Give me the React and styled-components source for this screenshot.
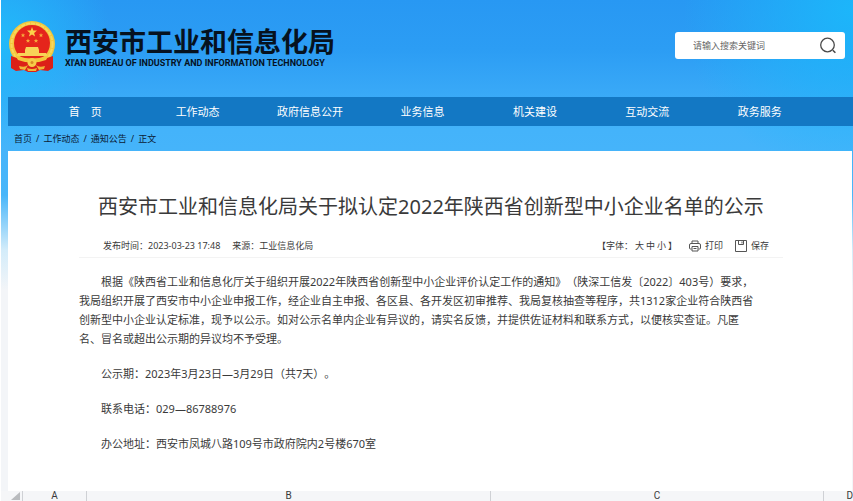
import React from 'react';
import styled, { createGlobalStyle } from 'styled-components';

const navItems = ['首\u3000页', '工作动态', '政府信息公开', '业务信息', '机关建设', '互动交流', '政务服务'];

const columns = ['A', 'B', 'C', 'D'];

const Emblem = () => (
    <svg width="48" height="52" viewBox="0 0 48 52" aria-hidden="true">
        <circle cx="24" cy="24" r="23" fill="#f3c73c" />
        <circle cx="24" cy="24" r="20.500" fill="none" stroke="#f9d75c" strokeWidth="2" strokeDasharray="4 1" />
        <circle cx="24" cy="23" r="18" fill="#e5251c" />
        <path d="M24 7l1.300 3.400 3.700.2-2.900 2.300 1 3.600-3.100-2-3.100 2 1-3.600-2.900-2.300 3.700-.2z" fill="#fbd24a" />
        <g fill="#f7a93c">
            <path d="M15 13l.6 1.500 1.600.1-1.200 1 .4 1.600-1.400-.9-1.400.9.4-1.600-1.200-1 1.600-.1z" />
            <path d="M33 13l.6 1.500 1.600.1-1.200 1 .4 1.600-1.400-.9-1.400.9.4-1.600-1.200-1 1.600-.1z" />
            <path d="M20 18.500l.6 1.500 1.600.1-1.200 1 .4 1.600-1.400-.9-1.400.9.4-1.600-1.200-1 1.600-.1z" />
            <path d="M28 18.500l.6 1.500 1.600.1-1.200 1 .4 1.600-1.400-.9-1.400.9.4-1.600-1.200-1 1.600-.1z" />
        </g>
        <path d="M18 27h12l1 3H17zM17 30h14v3h7l2 3H8l2-3h7z" fill="#f8d458" />
        <path d="M3 36l6 2q15 5 30 0l6-2v12l-5 3-8-1-4 2h-8l-4-2-8 1-5-3z" fill="#dc2018" />
        <path d="M7 35q17 7 34 0l-3 5q-14 5-28 0z" fill="#f3c73c" />
        <circle cx="24" cy="42.500" r="4.500" fill="#f6cd49" />
        <circle cx="24" cy="42.500" r="1.500" fill="#d98b25" />
        <path d="M11 46q6 2 9-1l-3 5-5-1zM37 46q-6 2-9-1l3 5 5-1zM19 48q5 2 10 0l-1 3h-8z" fill="#f0b638" />
    </svg>
);

const SearchIcon = () => (
    <svg width="18" height="18" viewBox="0 0 18 18" fill="none" stroke="#4a4a4a" strokeWidth="1.300" aria-hidden="true">
        <circle cx="8.500" cy="8" r="6.800" />
        <path d="M13.800 13.200l2.600 2.600" strokeWidth="1.600" />
    </svg>
);

const PrintIcon = () => (
    <svg width="12" height="12" viewBox="0 0 12 12" fill="none" stroke="#555" aria-hidden="true">
        <path d="M3 3.500V1h6v2.500M2.500 9H1.500Q.5 9 .5 8V5Q.5 3.500 2 3.500h8q1.500 0 1.500 1.500v3q0 1-1 1h-1" />
        <path d="M3 6.500h6V11H3zM4.500 8.500h3" />
    </svg>
);

const SaveIcon = () => (
    <svg width="12" height="12" viewBox="0 0 12 12" fill="none" stroke="#555" aria-hidden="true">
        <path d="M.5.5h11v11H.5z" />
        <path d="M3.500.5v4h5v-4M7 1.500v2" />
    </svg>
);

const App = () => {
    return (
        <>
            <GlobalStyle />
            <Page>
                <Header>
                    <Brand href="#">
                        <Emblem />
                        <BrandText>
                            <BrandName>西安市工业和信息化局</BrandName>
                            <BrandLatin>XI'AN BUREAU OF INDUSTRY AND INFORMATION TECHNOLOGY</BrandLatin>
                        </BrandText>
                    </Brand>
                    <Search onSubmit={e => e.preventDefault()}>
                        <SearchInput type="text" aria-label="搜索" placeholder="请输入搜索关键词" />
                        <SearchButton type="submit" aria-label="搜索">
                            <SearchIcon />
                        </SearchButton>
                    </Search>
                </Header>
                <Nav>
                    {navItems.map(item => (
                        <NavLink href="#" key={item}>{item}</NavLink>
                    ))}
                </Nav>
                <Breadcrumb>
                    <a href="#">首页</a>
                    <Slash>/</Slash>
                    <a href="#">工作动态</a>
                    <Slash>/</Slash>
                    <a href="#">通知公告</a>
                    <Slash>/</Slash>
                    <span>正文</span>
                </Breadcrumb>
                <Article>
                    <Title>西安市工业和信息化局关于拟认定2022年陕西省创新型中小企业名单的公示</Title>
                    <Meta>
                        <MetaGroup>
                            <span>发布时间：2023-03-23 17:48</span>
                            <span>来源：工业信息化局</span>
                        </MetaGroup>
                        <MetaGroup>
                            <FontSizes>
                                <span>【字体：</span>
                                <PlainButton type="button">大</PlainButton>
                                <PlainButton type="button">中</PlainButton>
                                <PlainButton type="button">小</PlainButton>
                                <span>】</span>
                            </FontSizes>
                            <PlainButton type="button"><PrintIcon />打印</PlainButton>
                            <PlainButton type="button"><SaveIcon />保存</PlainButton>
                        </MetaGroup>
                    </Meta>
                    <Content>
                        <p>
                            根据《陕西省工业和信息化厅关于组织开展2022年陕西省创新型中小企业评价认定工作的通知》（陕深工信发〔2022〕403号）要求，<br />
                            我局组织开展了西安市中小企业申报工作，经企业自主申报、各区县、各开发区初审推荐、我局复核抽查等程序，共1312家企业符合陕西省<br />
                            创新型中小企业认定标准，现予以公示。如对公示名单内企业有异议的，请实名反馈，并提供佐证材料和联系方式，以便核实查证。凡匿<br />
                            名、冒名或超出公示期的异议均不予受理。
                        </p>
                        <p>公示期：2023年3月23日—3月29日（共7天）。</p>
                        <p>联系电话：029—86788976</p>
                        <p>办公地址：西安市凤城八路109号市政府院内2号楼670室</p>
                    </Content>
                </Article>
                <SheetHeader>
                    <Corner>
                        <svg width="9" height="8" viewBox="0 0 9 8" aria-hidden="true">
                            <path d="M9 0v8H0z" fill="#b9bbbe" />
                        </svg>
                    </Corner>
                    {columns.map(name => (
                        <Column key={name}>{name}</Column>
                    ))}
                </SheetHeader>
            </Page>
        </>
    );
};

const GlobalStyle = createGlobalStyle`
  * {
    box-sizing: border-box;
  }
  body {
    margin: 0;
    font-family: "Noto Sans", "Noto Sans CJK SC", sans-serif;
    color: #3a3a3a;
    text-spacing-trim: space-all;
  }
  a {
    color: inherit;
    text-decoration: none;
  }
  button, input {
    font-family: inherit;
  }
  h1, p {
    margin: 0;
  }
`;

const Page = styled.div`
  min-height: 100vh;
  display: flex;
  flex-direction: column;
  overflow: hidden;
  border-left: 1px solid #fff;
  background:
    radial-gradient(circle at 0 40px, #22bafa 0, rgba(34, 186, 250, 0) 110px),
    radial-gradient(circle at 100% 10px, #1cb6fa 0, rgba(28, 182, 250, 0) 170px),
    linear-gradient(#2898f3 0, #2c9df4 50px, #44b3fa 130px, #48b6fa 195px, #d3ecfa 250px, #f3f5f8 290px);
`;

const Header = styled.header`
  display: flex;
  align-items: center;
  justify-content: space-between;
  height: 97px;
  padding: 0 8px 6px 7px;
`;

const Brand = styled.a`
  display: flex;
  align-items: center;
  gap: 9px;
  color: #06121f;
`;

const BrandText = styled.span`
  display: flex;
  flex-direction: column;
  padding-top: 2px;
`;

const BrandName = styled.span`
  font-family: "Noto Sans CJK SC", sans-serif;
  font-size: 27px;
  font-weight: 700;
  line-height: 32px;
`;

const BrandLatin = styled.span`
  font-family: Roboto, sans-serif;
  font-size: 9px;
  font-weight: 700;
  line-height: 12px;
  white-space: nowrap;
`;

const Search = styled.form`
  display: flex;
  align-items: center;
  width: 170px;
  height: 27px;
  padding: 0 8px 0 18px;
  border-radius: 3px;
  background: #fff;
`;

const SearchInput = styled.input`
  flex: 1;
  min-width: 0;
  padding: 0;
  border: 0;
  outline: 0;
  background: none;
  font-size: 9px;

  &::placeholder {
    color: #666;
  }
`;

const SearchButton = styled.button`
  display: flex;
  padding: 0;
  border: 0;
  background: none;
  cursor: pointer;
`;

const Nav = styled.nav`
  display: flex;
  margin-left: 7px;
  padding: 0 37px 0 21px;
  background: #1378c4;
`;

const NavLink = styled.a`
  flex: 1;
  color: #fff;
  font-size: 11px;
  line-height: 29px;
  text-align: center;
`;

const Breadcrumb = styled.div`
  display: flex;
  padding-left: 13px;
  color: #0b2036;
  font-size: 9px;
  line-height: 25px;
`;

const Slash = styled.span`
  padding: 0 4px;
`;

const Article = styled.main`
  flex: 1;
  margin: 0 1px 0 7px;
  padding: 41px 69px 36px 71px;
  background: #fff;
`;

const Title = styled.h1`
  font-size: 20px;
  font-weight: 400;
  line-height: 30px;
  text-align: center;
`;

const Meta = styled.div`
  display: flex;
  justify-content: space-between;
  margin-top: 11px;
  padding: 5px 14px 3px 24px;
  border-bottom: 1px solid #f3f3f3;
  font-size: 9px;
  line-height: 16px;
`;

const MetaGroup = styled.div`
  display: flex;
  gap: 12px;
`;

const FontSizes = styled.span`
  display: flex;
  gap: 2px;
`;

const PlainButton = styled.button`
  display: flex;
  align-items: center;
  gap: 4px;
  padding: 0;
  border: 0;
  background: none;
  color: inherit;
  font-size: 9px;
  line-height: 16px;
  cursor: pointer;
`;

const Content = styled.div`
  display: flex;
  flex-direction: column;
  gap: 16px;
  padding-top: 14px;
  font-size: 11px;
  line-height: 19px;

  p {
    text-indent: 2em;
  }
`;

const SheetHeader = styled.div`
  display: grid;
  grid-template-columns: 22px 64px 404fr 333fr 29px;
  background: #f5f6f8;
`;

const Corner = styled.div`
  display: flex;
  align-items: center;
  justify-content: flex-end;
  padding-right: 2px;
  border-right: 1px solid #cfd1d5;
`;

const Column = styled.div`
  border-right: 1px solid #cfd1d5;
  font-family: Roboto, sans-serif;
  font-size: 10px;
  line-height: 10px;
  text-align: center;

  &:last-child {
    border-right: 0;
    text-align: right;
  }
`;

export default App;
